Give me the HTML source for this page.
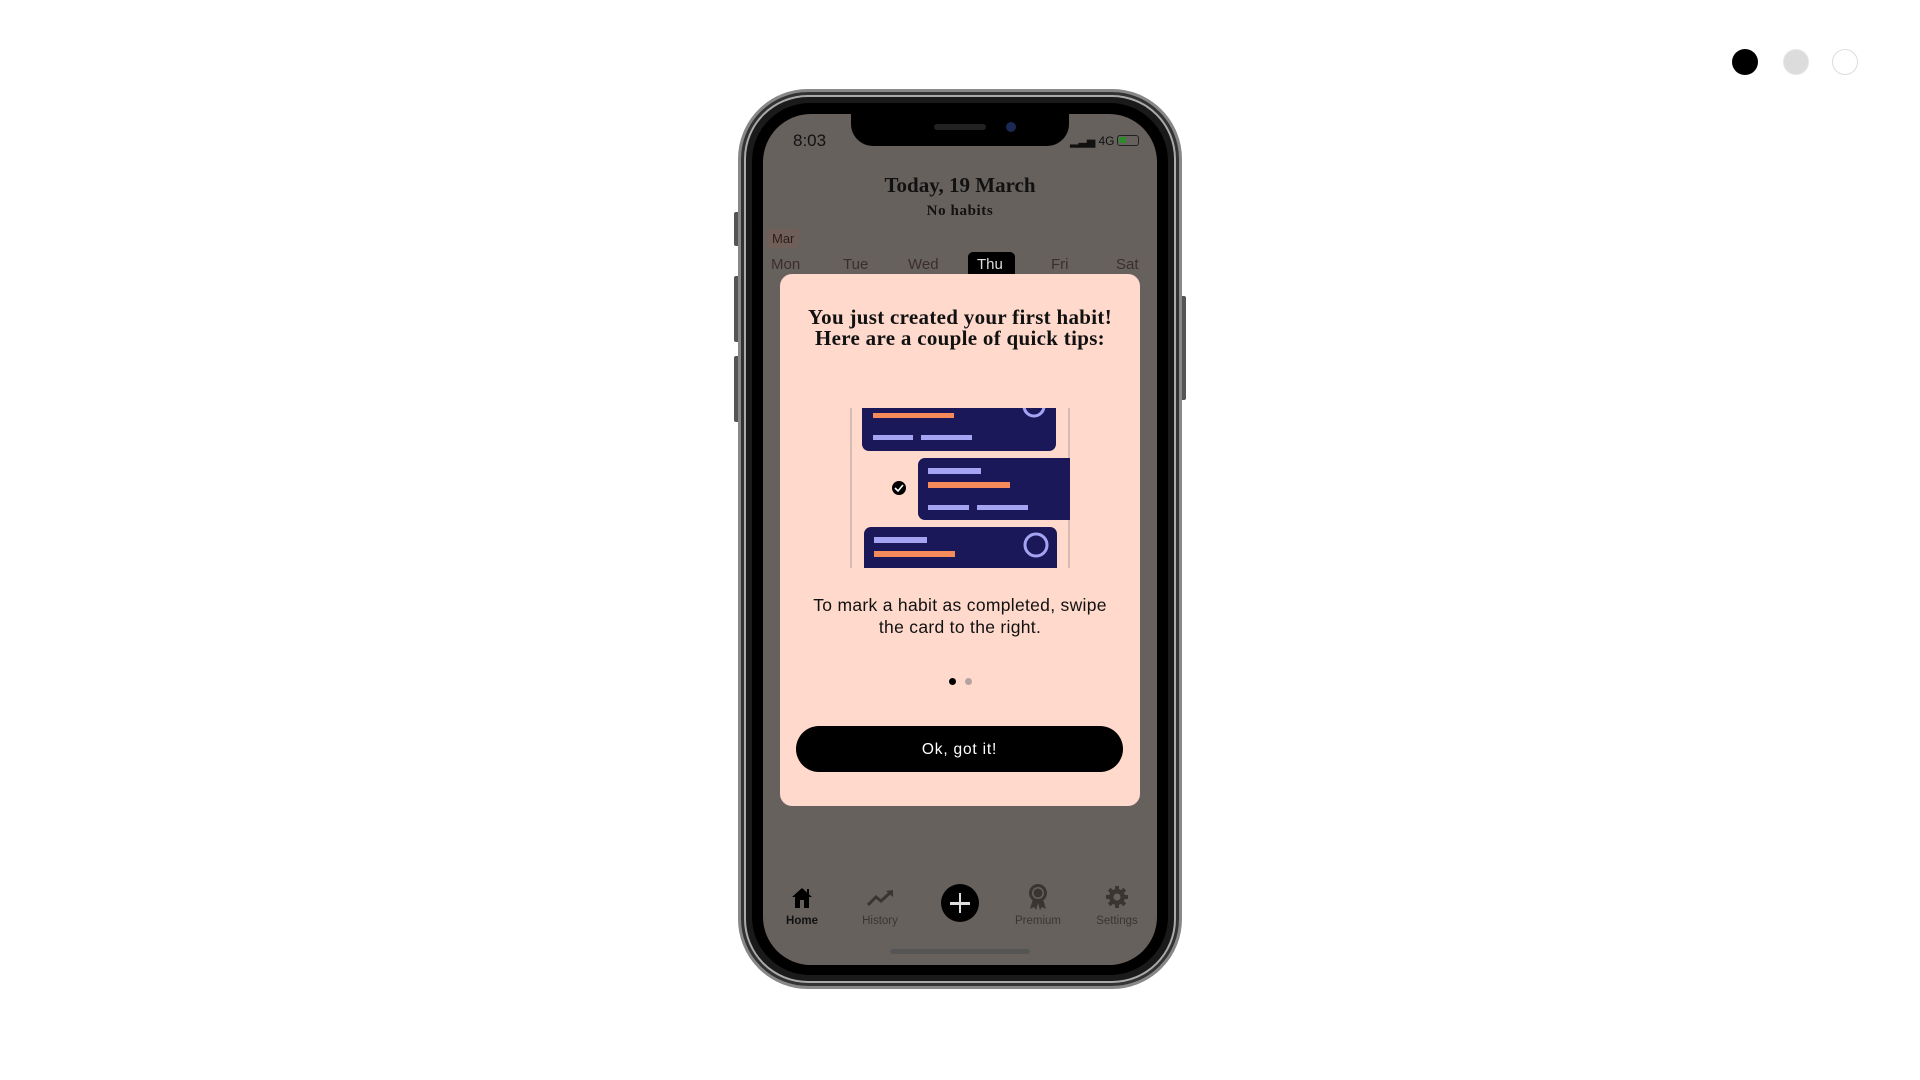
<!DOCTYPE html>
<html><head><meta charset="utf-8"><style>
*{margin:0;padding:0;box-sizing:border-box}
body{width:1920px;height:1080px;background:#fff;position:relative;overflow:hidden;font-family:"Liberation Sans",sans-serif}
.a{position:absolute}
.dot{position:absolute;width:26px;height:26px;border-radius:50%}
.serif{font-family:"Liberation Serif",serif;font-weight:bold}
.c{text-align:center}
</style></head><body>
<div class="dot" style="left:1732px;top:49px;background:#000"></div>
<div class="dot" style="left:1783px;top:49px;background:#dcdcdc;border:1px solid #e6e6e6"></div>
<div class="dot" style="left:1832px;top:49px;background:#fff;border:1.5px solid #ddd"></div>

<div class="a" style="left:734px;top:212px;width:6px;height:34px;background:#555;border-radius:2px"></div>
<div class="a" style="left:734px;top:276px;width:6px;height:66px;background:#555;border-radius:2px"></div>
<div class="a" style="left:734px;top:356px;width:6px;height:66px;background:#555;border-radius:2px"></div>
<div class="a" style="left:1180px;top:296px;width:6px;height:104px;background:#555;border-radius:2px"></div>
<div class="a" style="left:738px;top:89px;width:444px;height:900px;border-radius:70px;background:#1a1a1a;border:3px solid #888;box-shadow:inset 0 0 0 3px #333,inset 0 0 0 5px #aaa"></div>
<div class="a" style="left:752px;top:103px;width:416px;height:872px;border-radius:58px;background:#000"></div>
<div class="a" style="left:763px;top:114px;width:394px;height:851px;border-radius:48px;background:#67615e;overflow:hidden">
  <div class="a" style="left:88px;top:-2px;width:218px;height:34px;background:#000;border-radius:0 0 22px 22px"></div>
  <div class="a" style="left:171px;top:10px;width:52px;height:6px;background:#222;border-radius:3px"></div>
  <div class="a" style="left:243px;top:8px;width:10px;height:10px;background:#1a2a55;border-radius:50%"></div>
  <div class="a" style="left:30px;top:17px;font-size:17px;color:#111">8:03</div>
  <div class="a" style="left:307px;top:20px;font-size:11px;color:#111">▂▃▅ <span style="font-size:12px">4G</span></div>
  <div class="a" style="left:354px;top:21px;width:22px;height:11px;border:1.5px solid #222;border-radius:3px"><div style="width:7px;height:6px;background:#2d8a2d;margin:1px"></div></div>
  <div class="a serif c" style="left:0;width:394px;top:59px;font-size:21px;color:#111">Today, 19 March</div>
  <div class="a serif c" style="left:0;width:394px;top:89px;font-size:15px;letter-spacing:0.6px;color:#111">No habits</div>
  <div class="a" style="left:4px;top:115px;padding:2px 5px;font-size:13px;color:#2a1e1c;background:#705e58;border-radius:4px">Mar</div>
  <div class="a" style="left:205px;top:138px;width:47px;height:26px;background:#000;border-radius:5px"></div>
  <div class="a" style="top:142px;left:0;width:394px;font-size:15px;color:#3a2e2c">
    <span class="a" style="left:8px">Mon</span><span class="a" style="left:80px">Tue</span><span class="a" style="left:145px">Wed</span><span class="a" style="left:214px;color:#ddd">Thu</span><span class="a" style="left:288px">Fri</span><span class="a" style="left:353px">Sat</span>
  </div>
  <div class="a" style="left:17px;top:160px;width:360px;height:532px;background:#fed9cc;border-radius:12px">
    <div class="a serif c" style="left:0;width:360px;top:33px;font-size:21px;letter-spacing:0.3px;line-height:21px;color:#111">You just created your first habit!<br>Here are a couple of quick tips:</div>
    <svg class="a" style="left:70px;top:134px" width="220" height="160" viewBox="850 408 220 160">
      <line x1="851" y1="408" x2="851" y2="568" stroke="#cbb3ab" stroke-width="1.5"/>
      <line x1="1069" y1="408" x2="1069" y2="568" stroke="#cbb3ab" stroke-width="1.5"/>
      <rect x="862" y="398" width="194" height="53" rx="7" fill="#1a1859"/>
      <rect x="873" y="413" width="81" height="5" fill="#f58a5b"/>
      <rect x="873" y="435" width="40" height="5" fill="#a5a4f3"/>
      <rect x="921" y="435" width="51" height="5" fill="#a5a4f3"/>
      <circle cx="1034" cy="406" r="10" fill="none" stroke="#a5a4f3" stroke-width="3"/>
      <rect x="918" y="458" width="160" height="62" rx="7" fill="#1a1859"/>
      <rect x="928" y="468" width="53" height="6" fill="#a5a4f3"/>
      <rect x="928" y="482" width="82" height="6" fill="#f58a5b"/>
      <rect x="928" y="505" width="41" height="5" fill="#a5a4f3"/>
      <rect x="977" y="505" width="51" height="5" fill="#a5a4f3"/>
      <circle cx="899" cy="488" r="7" fill="#000"/>
      <path d="M895 488 l3 3 l5 -6" stroke="#fff" stroke-width="1.6" fill="none"/>
      <rect x="864" y="527" width="193" height="50" rx="7" fill="#1a1859"/>
      <rect x="874" y="537" width="53" height="6" fill="#a5a4f3"/>
      <rect x="874" y="551" width="81" height="6" fill="#f58a5b"/>
      <circle cx="1036" cy="545" r="11" fill="none" stroke="#a5a4f3" stroke-width="3"/>
    </svg>
    <div class="a c" style="left:0;width:360px;top:320px;font-size:17.5px;letter-spacing:0.3px;line-height:22px;color:#111">To mark a habit as completed, swipe<br>the card to the right.</div>
    <div class="a" style="left:169px;top:404px;width:7px;height:7px;border-radius:50%;background:#000"></div>
    <div class="a" style="left:185px;top:404px;width:7px;height:7px;border-radius:50%;background:#b4a4a0"></div>
    <div class="a c" style="left:16px;top:452px;width:327px;height:46px;border-radius:23px;background:#000;color:#fff;font-size:15.5px;line-height:48px;letter-spacing:0.8px">Ok, got it!</div>
  </div>
  <svg class="a" style="left:28px;top:773px" width="22" height="22" viewBox="0 0 22 22"><path d="M11 1 L21 10 L18 10 L18 21 L4 21 L4 10 L1 10 Z" fill="#000"/><rect x="9" y="13" width="4" height="8" fill="#67615e"/><rect x="16" y="2" width="2" height="5" fill="#000"/></svg>
  <div class="a c" style="left:0;width:78px;top:801px;font-size:11.5px;color:#111;font-weight:bold">Home</div>
  <svg class="a" style="left:104px;top:775px" width="28" height="18" viewBox="0 0 28 18"><path d="M1 16 L9 8 L14 12 L24 3" stroke="#3a3533" stroke-width="3" fill="none"/><path d="M19 2 L26 1 L26 8 Z" fill="#3a3533"/></svg>
  <div class="a c" style="left:78px;width:78px;top:801px;font-size:11.5px;color:#3a3533">History</div>
  <div class="a" style="left:178px;top:770px;width:38px;height:38px;border-radius:50%;background:#000"></div>
  <div class="a" style="left:187px;top:788px;width:20px;height:2.5px;background:#ddd"></div>
  <div class="a" style="left:195.8px;top:779px;width:2.5px;height:20px;background:#ddd"></div>
  <svg class="a" style="left:264px;top:769px" width="22" height="28" viewBox="0 0 22 28"><path d="M6 16 L3 26 L7 24 L9 27 L11 20 L13 27 L15 24 L19 26 L16 16 Z" fill="#3a3533"/><circle cx="11" cy="10" r="9" fill="#3a3533"/><circle cx="11" cy="10" r="6" fill="#67615e"/><circle cx="11" cy="10" r="4.5" fill="#3a3533"/></svg>
  <div class="a c" style="left:236px;width:78px;top:801px;font-size:11.5px;color:#3a3533">Premium</div>
  <svg class="a" style="left:342px;top:771px" width="24" height="24" viewBox="0 0 24 24"><g fill="#3a3533"><circle cx="12" cy="12" r="8"/><rect x="10" y="1" width="4" height="22"/><rect x="1" y="10" width="22" height="4"/><rect x="10" y="1" width="4" height="22" transform="rotate(45 12 12)"/><rect x="10" y="1" width="4" height="22" transform="rotate(-45 12 12)"/></g><circle cx="12" cy="12" r="3.5" fill="#67615e"/></svg>
  <div class="a c" style="left:315px;width:78px;top:801px;font-size:11.5px;color:#3a3533">Settings</div>
  <div class="a" style="left:127px;top:835px;width:140px;height:5px;border-radius:3px;background:#555"></div>
</div>
</body></html>
